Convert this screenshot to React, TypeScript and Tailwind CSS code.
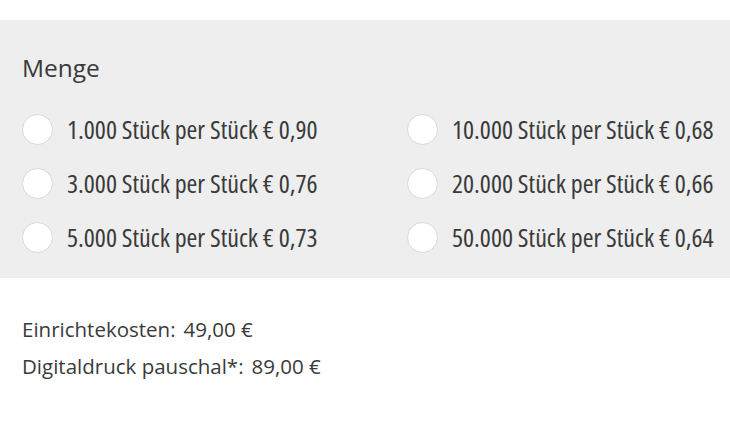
const options = [
  ["1.000 Stück per Stück € 0,90", "10.000 Stück per Stück € 0,68"],
  ["3.000 Stück per Stück € 0,76", "20.000 Stück per Stück € 0,66"],
  ["5.000 Stück per Stück € 0,73", "50.000 Stück per Stück € 0,64"],
]

const Radio = ({ label }: { label: string }) => (
  <label className="flex items-center gap-[14px] h-[54px] cursor-pointer">
    <span className="w-[31px] h-[31px] rounded-full bg-white border border-[#d9d9d9] shrink-0" />
    <span className="text-[26px] leading-none whitespace-nowrap [font-stretch:75%]">{label}</span>
  </label>
)

export default function App() {
  return (
    <div className="w-[730px] h-[433px] bg-white text-[#3a3a3a] font-['Open_Sans',sans-serif]">
      <div className="mt-[20px] h-[258px] bg-[#eeeeee] px-[22px] pt-[33px]">
        <h2 className="text-[24.5px] leading-[30px] mb-[19px]">Menge</h2>
        <div className="grid grid-cols-[385px_1fr]">
          {options.map(([a, b]) => (
            <div key={a} className="contents">
              <Radio label={a} />
              <Radio label={b} />
            </div>
          ))}
        </div>
      </div>
      <div className="px-[22px] pt-[33px] text-[20.5px] leading-[37px]">
        <p>
          Einrichtekosten:<span className="ml-[8px]">49,00 €</span>
        </p>
        <p>
          Digitaldruck pauschal*:<span className="ml-[8px]">89,00 €</span>
        </p>
      </div>
    </div>
  )
}
